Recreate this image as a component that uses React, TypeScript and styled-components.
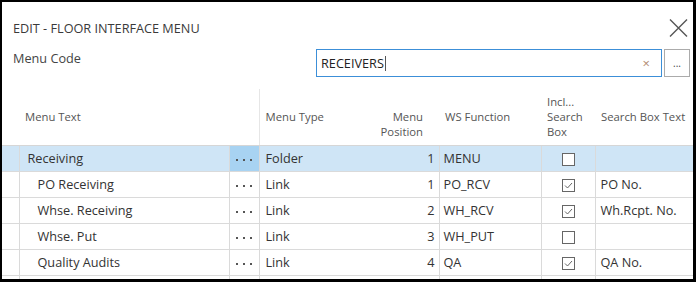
import React from 'react';
import styled, { createGlobalStyle } from 'styled-components';

const GlobalStyle = createGlobalStyle`
    html, body {
        margin: 0;
        padding: 0;
        background: #000;
    }
    * {
        box-sizing: border-box;
    }
`;

const Frame = styled.div`
    width: 696px;
    height: 282px;
    overflow: hidden;
    background: #fff;
    border-style: solid;
    border-color: #000;
    border-width: 2px 3px 3px 2px;
    font-family: 'Open Sans', 'Noto Sans', sans-serif;
    font-size: 12.7px;
    color: #333;
`;

const Top = styled.div`
    padding: 17px 3px 0 11px;
`;

const TitleRow = styled.div`
    display: flex;
    align-items: center;
    justify-content: space-between;
    height: 18px;
`;

const Title = styled.div`
    color: #3a3a3a;
`;

const CloseButton = styled.div`
    width: 19px;
    height: 18px;
    margin-right: 2px;
    display: flex;
`;

const CodeRow = styled.div`
    display: flex;
    align-items: flex-start;
    margin-top: 12px;
    height: 28px;
`;

const Label = styled.div`
    line-height: 18px;
    color: #444;
`;

const Field = styled.div`
    margin-left: auto;
    width: 346px;
    height: 28px;
    border: 1px solid #3c8fd8;
    display: flex;
    align-items: center;
    padding: 0 11px 0 4px;
    color: #222;
`;

const FieldText = styled.span`
    flex: 1;
    display: flex;
    align-items: center;
`;

const Caret = styled.span`
    display: inline-block;
    width: 1px;
    height: 15px;
    background: #555;
    margin-left: 1px;
`;

const Clear = styled.span`
    color: #b08a70;
    font-size: 13px;
    line-height: 1;
`;

const LookupButton = styled.div`
    margin-left: 2px;
    width: 26px;
    height: 28px;
    border: 1px solid #ababab;
    display: flex;
    align-items: flex-end;
    justify-content: center;
    padding-bottom: 8px;
    font-size: 10px;
    line-height: 1;
    color: #444;
`;

const Grid = styled.table`
    margin-top: 12px;
    border-collapse: collapse;
    table-layout: fixed;
    width: 691px;
`;

const HeadCell = styled.th<{ $align?: string; $top?: number; $pr?: number; $pl?: number; $sep?: boolean }>`
    height: 56px;
    padding: ${(p) => p.$top ?? 20}px ${(p) => p.$pr ?? 4}px 0 ${(p) => p.$pl ?? 6}px;
    vertical-align: top;
    text-align: ${(p) => p.$align ?? 'left'};
    font-weight: normal;
    font-size: 11.3px;
    color: #555;
    line-height: 15px;
    white-space: nowrap;
    overflow: hidden;
    border-bottom: 1px solid #d6d6d6;
    border-left: ${(p) => (p.$sep ? '1px solid #e6e6e6' : 'none')};
`;

const Row = styled.tr<{ $selected?: boolean }>`
    background: ${(p) => (p.$selected ? '#cfe5f6' : '#fff')};
`;

const Cell = styled.td<{ $align?: string; $pl?: number; $pr?: number; $sep?: boolean; $dark?: boolean }>`
    height: 26px;
    padding: 0 ${(p) => p.$pr ?? 4}px 0 ${(p) => p.$pl ?? 6}px;
    text-align: ${(p) => p.$align ?? 'left'};
    white-space: nowrap;
    overflow: hidden;
    border-bottom: 1px solid #dadada;
    border-left: ${(p) => (p.$sep ? '1px solid #dadada' : 'none')};
    background: ${(p) => (p.$dark ? '#a8d3f2' : 'transparent')};
    color: #333;
`;

const Dots = styled.span`
    display: inline-flex;
    gap: 5px;
    align-items: center;
    vertical-align: middle;
`;

const Dot = styled.span`
    width: 2px;
    height: 2px;
    background: #555;
`;

const Box = styled.span`
    display: inline-flex;
    width: 13px;
    height: 13px;
    border: 1px solid #666;
    background: #fff;
    vertical-align: middle;
`;

type Item = {
    text: string;
    child: boolean;
    type: string;
    pos: number;
    fn: string;
    incl: boolean;
    search: string;
};

const items: Item[] = [
    { text: 'Receiving', child: false, type: 'Folder', pos: 1, fn: 'MENU', incl: false, search: '' },
    { text: 'PO Receiving', child: true, type: 'Link', pos: 1, fn: 'PO_RCV', incl: true, search: 'PO No.' },
    { text: 'Whse. Receiving', child: true, type: 'Link', pos: 2, fn: 'WH_RCV', incl: true, search: 'Wh.Rcpt. No.' },
    { text: 'Whse. Put', child: true, type: 'Link', pos: 3, fn: 'WH_PUT', incl: false, search: '' },
    { text: 'Quality Audits', child: true, type: 'Link', pos: 4, fn: 'QA', incl: true, search: 'QA No.' },
    { text: '', child: true, type: '', pos: 0, fn: '', incl: false, search: '' },
];

function CheckBox({ checked }: { checked: boolean }) {
    return (
        <Box>
            {checked && (
                <svg width="11" height="11" viewBox="0 0 11 11">
                    <polyline points="2,5.5 4.5,8 9,3" fill="none" stroke="#666" strokeWidth="1" />
                </svg>
            )}
        </Box>
    );
}

export default function App() {
    return (
        <>
            <GlobalStyle />
            <Frame>
                <Top>
                    <TitleRow>
                        <Title>EDIT - FLOOR INTERFACE MENU</Title>
                        <CloseButton>
                            <svg width="19" height="18" viewBox="0 0 19 18">
                                <path d="M1 0.5 L18 17.5 M18 0.5 L1 17.5" stroke="#555" strokeWidth="1.4" />
                            </svg>
                        </CloseButton>
                    </TitleRow>
                    <CodeRow>
                        <Label>Menu Code</Label>
                        <Field>
                            <FieldText>
                                RECEIVERS
                                <Caret />
                            </FieldText>
                            <Clear>×</Clear>
                        </Field>
                        <LookupButton>...</LookupButton>
                    </CodeRow>
                </Top>
                <Grid>
                    <colgroup>
                        <col style={{ width: 17 }} />
                        <col style={{ width: 210 }} />
                        <col style={{ width: 30 }} />
                        <col style={{ width: 90 }} />
                        <col style={{ width: 90 }} />
                        <col style={{ width: 102 }} />
                        <col style={{ width: 54 }} />
                        <col style={{ width: 98 }} />
                    </colgroup>
                    <thead>
                        <tr>
                            <HeadCell />
                            <HeadCell $pl={6}>Menu Text</HeadCell>
                            <HeadCell />
                            <HeadCell $sep>Menu Type</HeadCell>
                            <HeadCell $align="right" $pr={16}>
                                Menu
                                <br />
                                Position
                            </HeadCell>
                            <HeadCell>WS Function</HeadCell>
                            <HeadCell $top={5} $pl={6} $pr={0}>
                                Incl...
                                <br />
                                Search
                                <br />
                                Box
                            </HeadCell>
                            <HeadCell>Search Box Text</HeadCell>
                        </tr>
                    </thead>
                    <tbody>
                        {items.map((it, i) => (
                            <Row key={i} $selected={i === 0}>
                                <Cell />
                                <Cell $sep $pl={it.child ? 18 : 8}>{it.text}</Cell>
                                <Cell $sep $dark={i === 0} $align="center" $pl={0} $pr={0}>
                                    {it.text && (
                                        <Dots>
                                            <Dot />
                                            <Dot />
                                            <Dot />
                                        </Dots>
                                    )}
                                </Cell>
                                <Cell $sep>{it.type}</Cell>
                                <Cell $align="right" $pr={4}>{it.pos || ''}</Cell>
                                <Cell $sep $pl={4}>{it.fn}</Cell>
                                <Cell $sep $align="center" $pl={0} $pr={0}>
                                    {it.text && <CheckBox checked={it.incl} />}
                                </Cell>
                                <Cell $sep $pl={5}>{it.search}</Cell>
                            </Row>
                        ))}
                    </tbody>
                </Grid>
            </Frame>
        </>
    );
}
